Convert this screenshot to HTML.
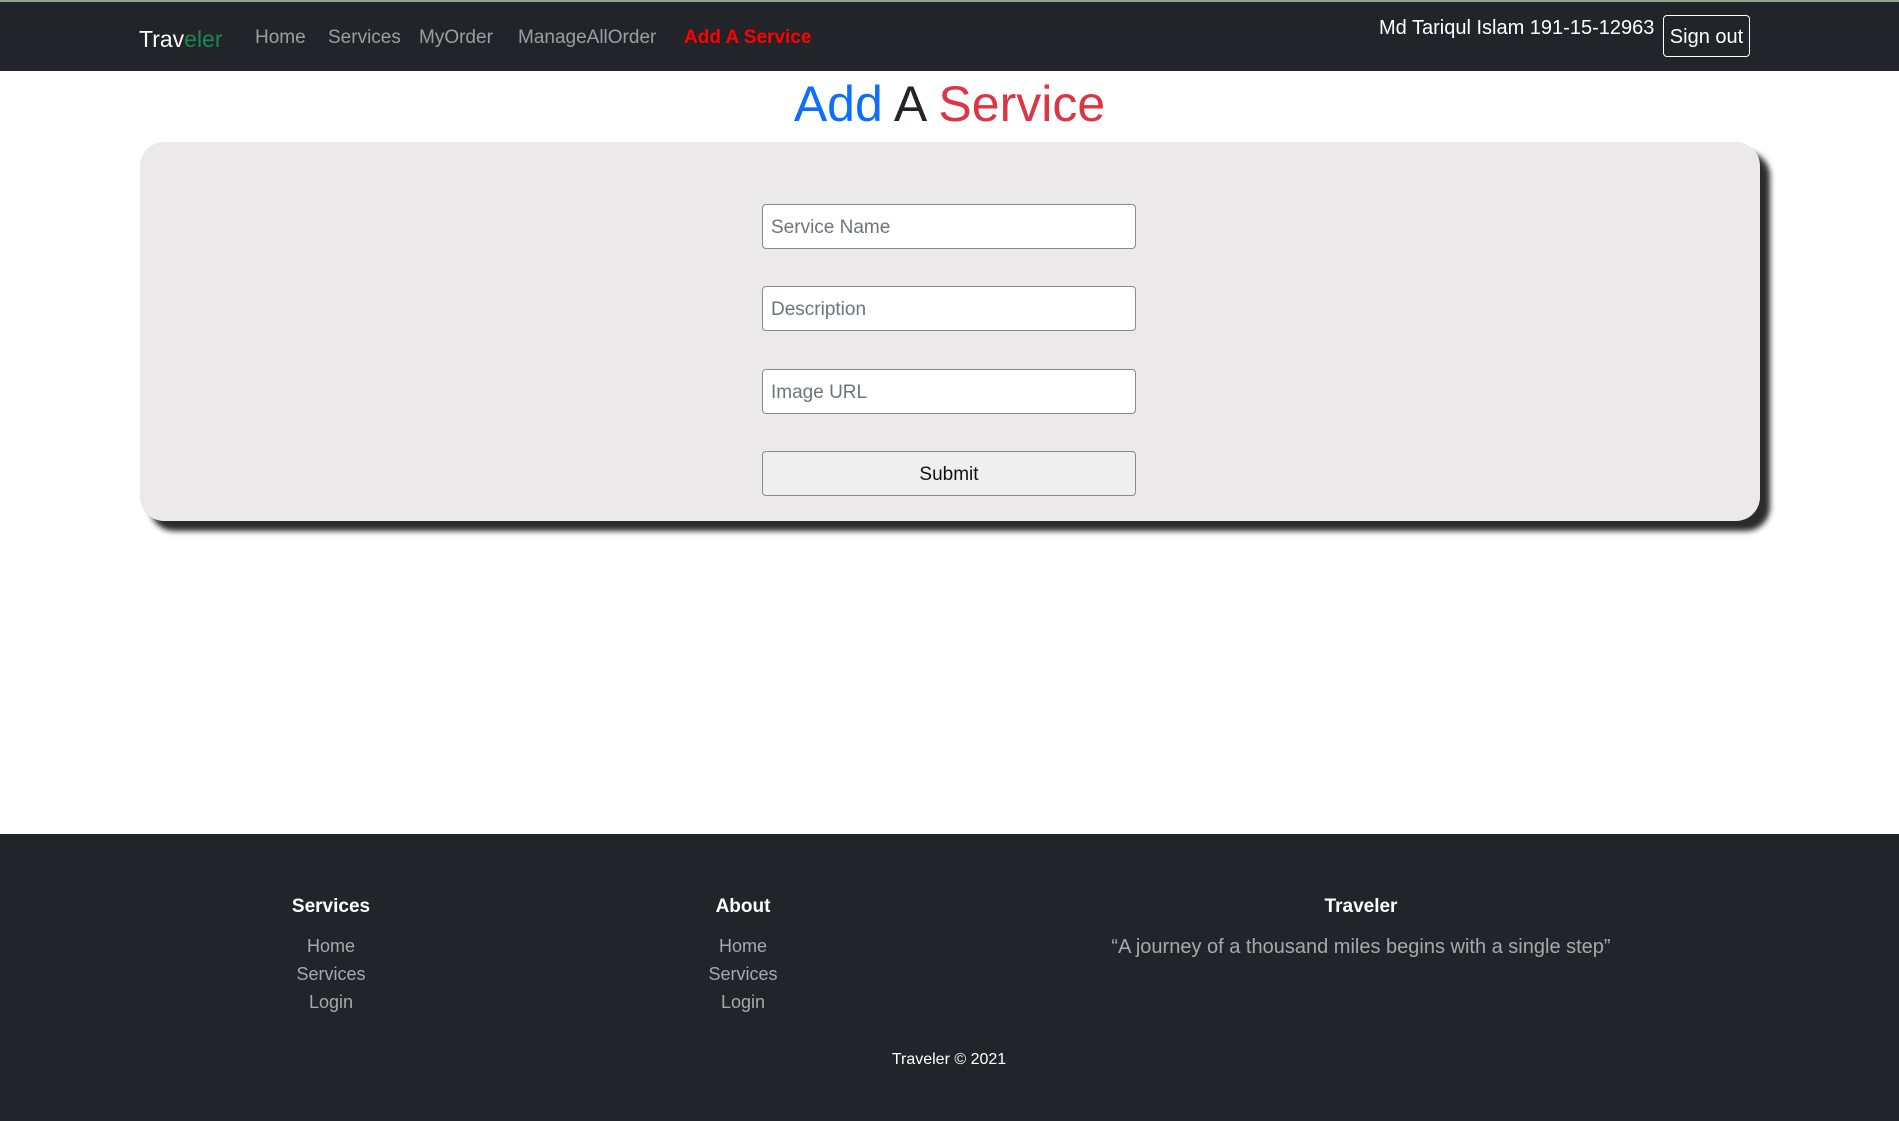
<!DOCTYPE html>
<html><head><meta charset="utf-8"><style>
*{box-sizing:border-box;margin:0;padding:0}
body{width:1899px;height:1121px;position:relative;font-family:"Liberation Sans",sans-serif;background:#fff;overflow:hidden}
.nav{position:absolute;left:0;top:0;width:1899px;height:71px;background:#212529;border-top:2px solid #8fa98a}
.a{position:absolute;top:25px;font-size:19px;color:rgba(255,255,255,.55);white-space:nowrap}
.h{position:absolute;text-align:center;white-space:nowrap}
.inp{position:absolute;left:762px;width:374px;height:45px;border:1px solid #8a8a8a;border-radius:4px;background:#fff;font-size:19px;color:#6c757d;padding:12px 8px 0}
.foot{position:absolute;left:0;top:834px;width:1899px;height:287px;background:#212529}
.fh{position:absolute;color:#fff;font-weight:bold;font-size:19px;transform:translateX(-50%);white-space:nowrap}
.fl{position:absolute;color:rgba(255,255,255,.6);font-size:18px;transform:translateX(-50%);white-space:nowrap}
</style></head><body>
<div class="nav">
<div class="a" style="left:139px;top:24px;font-size:23px;color:#fff">Trav<span style="color:#198754">eler</span></div>
<div class="a" style="left:255px">Home</div>
<div class="a" style="left:328px">Services</div>
<div class="a" style="left:419px">MyOrder</div>
<div class="a" style="left:518px">ManageAllOrder</div>
<div class="a" style="left:684px;color:#f00;font-weight:bold">Add A Service</div>
<div class="a" style="left:1379px;top:15px;color:#fff;font-size:20px">Md Tariqul Islam 191-15-12963</div>
<div style="position:absolute;left:1663px;top:13px;width:87px;height:42px;border:1px solid #fff;border-radius:4px;color:#fff;font-size:20px;text-align:center;line-height:42px">Sign out</div>
</div>
<div class="h" style="left:0;width:1899px;top:75px;font-size:50px;color:#212529"><span style="color:#0d6efd">Add</span> A <span style="color:#dc3545">Service</span></div>
<div style="position:absolute;left:140px;top:142px;width:1620px;height:379px;background:#ebe9ea;border-radius:24px;box-shadow:10px 10px 6px #2b2b2b"></div>
<div class="inp" style="top:204px">Service Name</div>
<div class="inp" style="top:286px">Description</div>
<div class="inp" style="top:369px">Image URL</div>
<div class="inp" style="top:451px;background:#efefef;color:#111;text-align:center">Submit</div>
<div class="foot">
<div class="fh" style="left:331px;top:62px">Services</div>
<div class="fh" style="left:743px;top:62px">About</div>
<div class="fh" style="left:1361px;top:62px">Traveler</div>
<div class="fl" style="left:331px;top:102px">Home</div>
<div class="fl" style="left:331px;top:130px">Services</div>
<div class="fl" style="left:331px;top:158px">Login</div>
<div class="fl" style="left:743px;top:102px">Home</div>
<div class="fl" style="left:743px;top:130px">Services</div>
<div class="fl" style="left:743px;top:158px">Login</div>
<div class="fl" style="left:1361px;top:102px;font-size:20px">“A journey of a thousand miles begins with a single step”</div>
<div class="fl" style="left:949px;top:217px;color:#fff;font-size:16px">Traveler © 2021</div>
</div>
</body></html>
